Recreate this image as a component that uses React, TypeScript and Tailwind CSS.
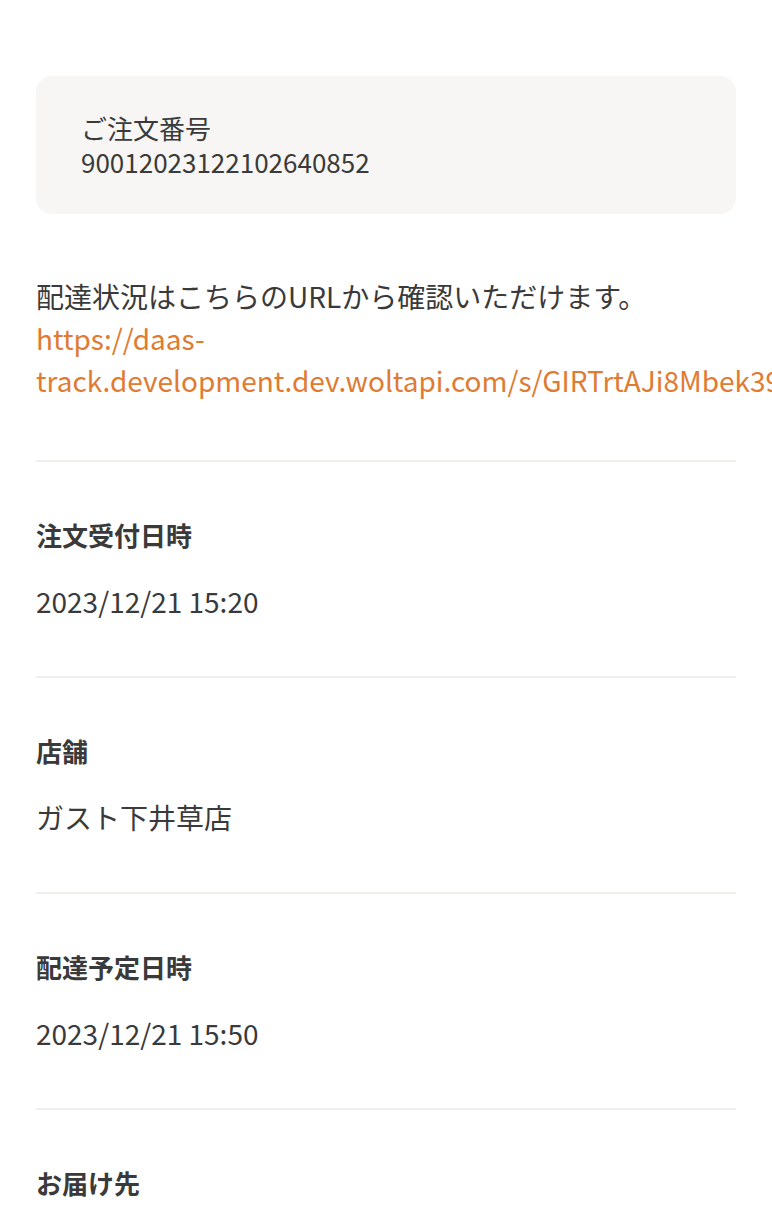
const font = { fontFamily: '"Noto Sans CJK JP", "Noto Sans", sans-serif' };

type Row = { label: string; value: string };

const rows: Row[] = [
  { label: '注文受付日時', value: '2023/12/21 15:20' },
  { label: '店舗', value: 'ガスト下井草店' },
  { label: '配達予定日時', value: '2023/12/21 15:50' },
  { label: 'お届け先', value: '' },
];

const App = () => {
  return (
    <div className="min-h-[1210px] bg-white px-9 pt-[76px] text-[#3a3a3a]" style={font}>
      <div className="rounded-2xl bg-[#f7f6f4] px-[45px] py-[35px] text-[26px] leading-[34px]">
        <p>ご注文番号</p>
        <p>90012023122102640852</p>
      </div>

      <div className="mt-[61px] text-[28px] leading-[42px]">
        <p>配達状況はこちらのURLから確認いただけます。</p>
        <a href="#" className="text-[#e07b31]">
          https://daas-track.development.dev.woltapi.com/s/GIRTrtAJi8Mbek39
        </a>
      </div>

      <div className="mt-[59px]">
        {rows.map((row) => (
          <div key={row.label} className="border-t-2 border-[#f0efeb] pt-[53px] pb-[55px]">
            <h3 className="text-[26px] font-bold leading-[40px]">{row.label}</h3>
            {row.value ? <p className="mt-[26px] text-[28px] leading-[40px]">{row.value}</p> : null}
          </div>
        ))}
      </div>
    </div>
  );
};

export default App;
